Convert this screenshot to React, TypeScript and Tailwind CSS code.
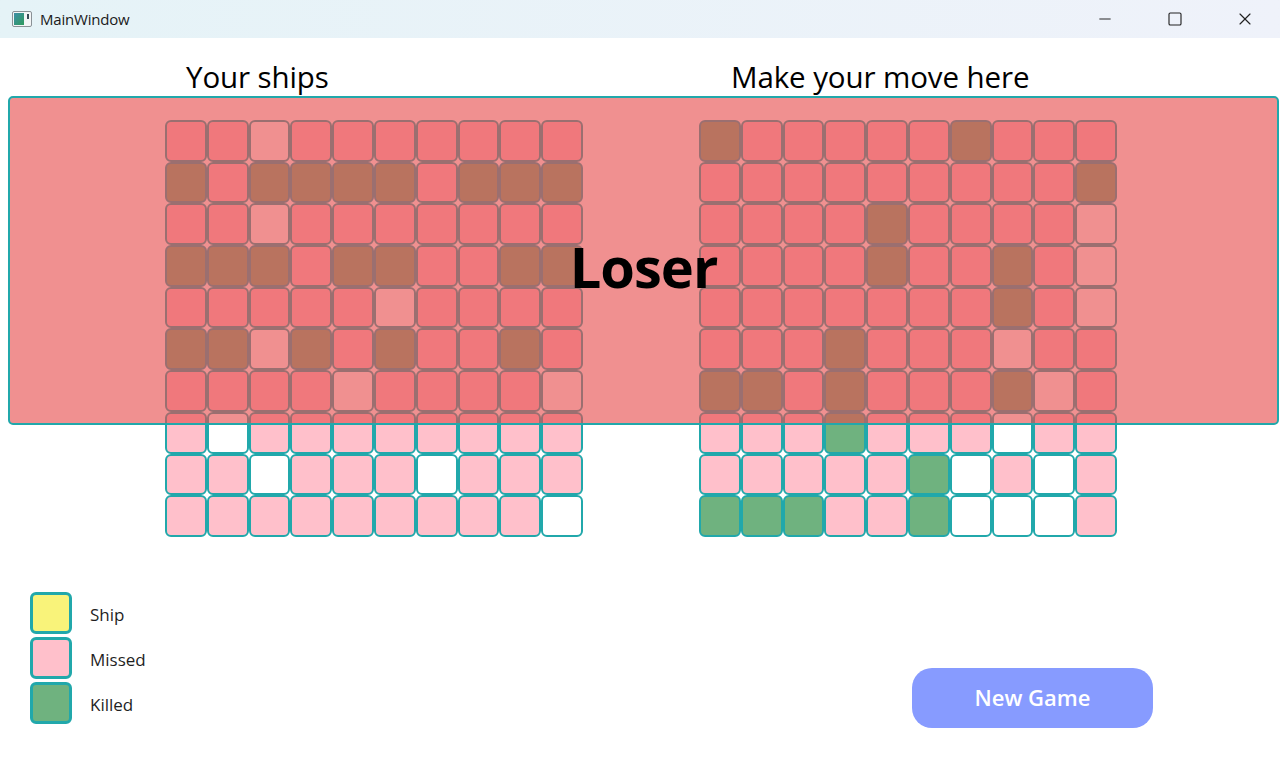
import { Minus, Square, X } from 'lucide-react';

type CellState = 'p' | 'w' | 'g';

// p = missed, w = empty, g = killed
const yourShips: string[] = [
  'ppwppppppp',
  'gpggggpggg',
  'ppwppppppp',
  'gggpggppgg',
  'pppppwpppp',
  'ggwgpgppgp',
  'ppppwppppw',
  'pwpppppppp',
  'ppwpppwppp',
  'pppppppppw',
];

const enemyShips: string[] = [
  'gpppppgppp',
  'pppppppppg',
  'ppppgppppw',
  'ppppgppgpw',
  'pppppppgpw',
  'pppgpppwpp',
  'ggpgpppgwp',
  'pppgpppwpp',
  'pppppgwpwp',
  'gggppgwwwp',
];

const cellColors: Record<CellState, string> = {
  p: 'bg-[#ffc0cb]',
  w: 'bg-white',
  g: 'bg-[#6fb27f]',
};

function Board({ rows }: { rows: string[] }) {
  return (
    <div className="grid grid-cols-10 w-[418px]">
      {rows.flatMap((row, r) =>
        row.split('').map((c, i) => (
          <div
            key={`${r}-${i}`}
            className={`h-[41.7px] border-2 border-[#21a8ab] rounded-[6px] ${cellColors[c as CellState]}`}
          />
        ))
      )}
    </div>
  );
}

function AppIcon() {
  return (
    <svg width="20" height="16" viewBox="0 0 20 16">
      <defs>
        <linearGradient id="ic" x1="0" y1="0" x2="1" y2="1">
          <stop offset="0" stopColor="#3e8fa8" />
          <stop offset="1" stopColor="#2f9a5c" />
        </linearGradient>
      </defs>
      <rect x="0.5" y="0.5" width="19" height="15" rx="1.5" fill="#f3f5f6" stroke="#8a9196" />
      <rect x="2" y="2" width="10" height="12" fill="url(#ic)" />
      <rect x="15" y="3" width="2" height="5" fill="#3a4a55" />
    </svg>
  );
}

function LegendItem({ color, label }: { color: string; label: string }) {
  return (
    <div className="flex items-center gap-[18px] h-[42px]">
      <div className={`w-[42px] h-[42px] border-[3px] border-[#21a8ab] rounded-[6px] ${color}`} />
      <span className="text-[17px] text-[#1f1f1f] mt-[3px]">{label}</span>
    </div>
  );
}

export default function App() {
  return (
    <div
      className="w-[1280px] h-[783px] flex flex-col bg-white overflow-hidden"
      style={{ fontFamily: '"Open Sans", "Noto Sans", sans-serif' }}
    >
      <div className="h-[38px] flex items-center bg-gradient-to-r from-[#e5f3f7] to-[#eff2fa] shrink-0">
        <div className="pl-[12px] flex items-center">
          <AppIcon />
        </div>
        <span className="ml-[8px] text-[15px] text-[#1a1a1a] tracking-[-0.2px]">MainWindow</span>
        <div className="ml-auto flex h-full">
          <div className="w-[70px] flex items-center justify-center">
            <Minus className="w-[18px] h-[18px] text-[#222]" strokeWidth={1.3} />
          </div>
          <div className="w-[70px] flex items-center justify-center">
            <Square className="w-[16px] h-[16px] text-[#222]" strokeWidth={1.7} />
          </div>
          <div className="w-[70px] flex items-center justify-center">
            <X className="w-[20px] h-[20px] text-[#222]" strokeWidth={1.4} />
          </div>
        </div>
      </div>

      <div className="relative flex-1 flex flex-col">
        <div className="pt-[21px] h-[57px] flex pl-[186px] text-[29.5px] leading-[36px] text-black tracking-[-0.1px]">
          <div className="w-[545px]">Your ships</div>
          <div>Make your move here</div>
        </div>

        <div className="mt-[25px] flex pl-[165px] gap-[116px]">
          <Board rows={yourShips} />
          <Board rows={enemyShips} />
        </div>

        <div className="mt-[55px] flex items-end">
          <div className="pl-[30px] flex flex-col gap-[3px]">
            <LegendItem color="bg-[#f9f37a]" label="Ship" />
            <LegendItem color="bg-[#ffc0cb]" label="Missed" />
            <LegendItem color="bg-[#6fb27f]" label="Killed" />
          </div>
          <button className="ml-auto mr-[127px] mb-[-4px] w-[241px] h-[60px] rounded-[20px] bg-[#879bff] text-white text-[22px] font-semibold">
            New Game
          </button>
        </div>

        {/* game over overlay */}
        <div className="absolute left-[8px] right-[1px] top-[58px] h-[329px] border-2 border-[#21a8ab] rounded-[5px] bg-[rgba(231,76,76,0.62)] flex items-center justify-center">
          <span className="text-[56px] font-bold text-black tracking-[-1px] mt-[10px]">Loser</span>
        </div>
      </div>
    </div>
  );
}
